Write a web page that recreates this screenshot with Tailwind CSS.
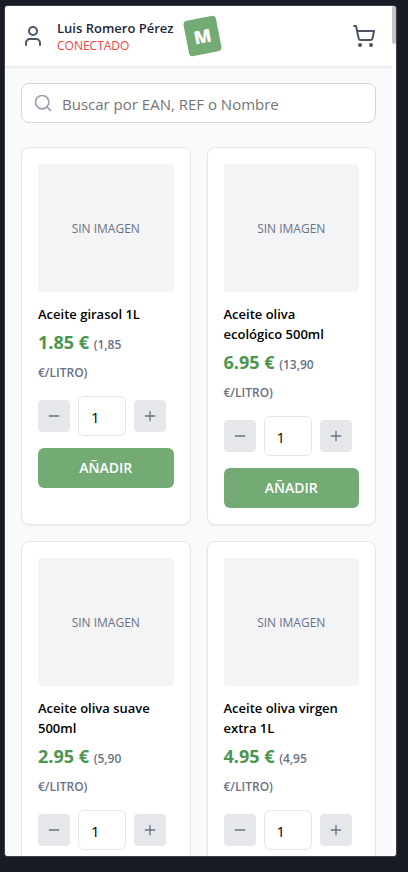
<!DOCTYPE html>
<html lang="es">
<head>
<meta charset="utf-8">
<meta name="viewport" content="width=device-width, initial-scale=1">
<title>Catálogo</title>
<script src="https://cdn.jsdelivr.net/npm/@tailwindcss/browser@4"></script>
</head>
<body class="flex h-screen bg-[#1a1c25] pt-[6px] pr-3 pb-4 pl-[5px] font-['Open_Sans','Noto_Sans',sans-serif] text-black">
<div class="flex min-w-0 flex-1 overflow-hidden rounded-xs bg-white outline outline-[#3d3f48]">
  <div class="flex min-w-0 flex-1 flex-col bg-gray-50">
    <header class="flex h-[61px] shrink-0 items-center border-b border-gray-200 bg-white px-4 shadow-xs">
      <button type="button" aria-label="Cuenta" class="text-gray-600">
        <svg class="size-6" viewBox="0 0 24 24" fill="none" stroke="currentColor" stroke-width="2" stroke-linecap="round" stroke-linejoin="round"><path d="M19 21v-2a4 4 0 0 0-4-4H9a4 4 0 0 0-4 4v2"/><circle cx="12" cy="7" r="4"/></svg>
      </button>
      <div class="ml-3 whitespace-nowrap">
        <p class="text-[13px] leading-5 font-semibold text-gray-800">Luis Romero Pérez</p>
        <p class="text-xs leading-4 text-[#ef4444]">CONECTADO</p>
      </div>
      <div class="ml-3 flex h-9 w-[33px] -rotate-11 items-center justify-center rounded-sm bg-[#74aa73] text-lg font-extrabold text-white">M</div>
      <button type="button" aria-label="Carrito" class="ml-auto text-gray-600">
        <svg class="size-6" viewBox="0 0 24 24" fill="none" stroke="currentColor" stroke-width="2" stroke-linecap="round" stroke-linejoin="round"><circle cx="8" cy="21" r="1"/><circle cx="19" cy="21" r="1"/><path d="M2.05 2.05h2l2.66 12.42a2 2 0 0 0 2 1.58h9.78a2 2 0 0 0 1.95-1.57l1.65-7.43H5.12"/></svg>
      </button>
    </header>
    <main class="min-h-0 flex-1 overflow-y-auto p-4 [scrollbar-width:none]">
      <label class="flex h-10 items-center gap-[9px] rounded-lg border border-gray-300 bg-white px-[11px] text-gray-400">
        <svg class="size-5 shrink-0" viewBox="0 0 24 24" fill="none" stroke="currentColor" stroke-width="2" stroke-linecap="round" stroke-linejoin="round"><circle cx="11" cy="11" r="8"/><path d="m21 21-4.3-4.3"/></svg>
        <input type="search" aria-label="Buscar" placeholder="Buscar por EAN, REF o Nombre" class="min-w-0 flex-1 bg-transparent pt-[2px] text-[15px] text-black outline-none placeholder:text-[#757575]">
      </label>
      <div id="products" class="mt-6 grid grid-cols-2 gap-4"></div>
    </main>
  </div>
  <div class="w-1 shrink-0 bg-white"><div class="h-[38px] rounded-full bg-[#c4c4c4]"></div></div>
</div>
<template id="card">
  <article class="flex flex-col rounded-lg border border-gray-200 bg-white p-4 shadow-xs">
    <div class="flex h-32 items-center justify-center rounded-sm bg-gray-100 pt-px text-xs text-gray-500">SIN IMAGEN</div>
    <h2 data-name class="mt-3 text-[13px] leading-5 font-semibold whitespace-pre-line"></h2>
    <p class="mt-1 text-lg leading-7 font-bold whitespace-pre-line text-[#4c9650]"><span data-price></span> <span data-unit class="text-xs leading-none font-semibold text-gray-500"></span></p>
    <div class="mt-3 flex items-center gap-2 text-gray-500">
      <button type="button" aria-label="Menos" class="flex size-8 items-center justify-center rounded-sm bg-gray-200"><svg class="size-4" viewBox="0 0 24 24" fill="none" stroke="currentColor" stroke-width="2" stroke-linecap="round"><path d="M5 12h14"/></svg></button>
      <input type="text" inputmode="numeric" aria-label="Cantidad" value="1" class="h-10 w-12 rounded-md border border-gray-200 bg-white px-3 pt-[2px] text-[15px] text-black">
      <button type="button" aria-label="Más" class="flex size-8 items-center justify-center rounded-sm bg-gray-200"><svg class="size-4" viewBox="0 0 24 24" fill="none" stroke="currentColor" stroke-width="2" stroke-linecap="round"><path d="M5 12h14M12 5v14"/></svg></button>
    </div>
    <button type="button" class="mt-3 h-10 rounded-md bg-[#74aa73] text-sm font-semibold text-white">AÑADIR</button>
  </article>
</template>
<script>
const items = [
  ["Aceite girasol 1L", "1.85 €", "(1,85\n€/LITRO)"],
  ["Aceite oliva\necológico 500ml", "6.95 €", "(13,90\n€/LITRO)"],
  ["Aceite oliva suave\n500ml", "2.95 €", "(5,90\n€/LITRO)"],
  ["Aceite oliva virgen\nextra 1L", "4.95 €", "(4,95\n€/LITRO)"]
];
const template = document.getElementById("card");
for (const [name, price, unit] of items) {
  const card = template.content.cloneNode(true);
  card.querySelector("[data-name]").textContent = name;
  card.querySelector("[data-price]").textContent = price;
  card.querySelector("[data-unit]").textContent = unit;
  document.getElementById("products").append(card);
}
</script>
</body>
</html>
